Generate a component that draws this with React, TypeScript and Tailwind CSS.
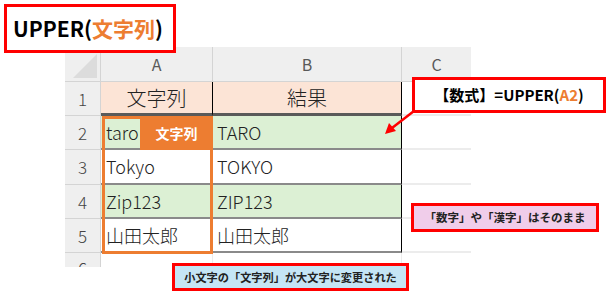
import React from "react";

const jp = { fontFamily: '"Noto Sans CJK JP", "Noto Sans", sans-serif' };

function HeadCell({ children, last }: { children?: React.ReactNode; last?: boolean }) {
  return (
    <div
      className={`flex items-center justify-center bg-[#efefef] text-[16px] text-[#595959] border-b border-[#d4d4d4] ${last ? "" : "border-r"}`}
    >
      {children}
    </div>
  );
}

function RowNum({ n }: { n: string }) {
  return (
    <div className="flex items-center justify-center bg-[#efefef] text-[17px] font-light text-[#444] border-b border-r border-[#d4d4d4]">
      {n}
    </div>
  );
}

export default function App() {
  const rows = [
    { n: "2", a: "taro", b: "TARO", green: true },
    { n: "3", a: "Tokyo", b: "TOKYO", green: false },
    { n: "4", a: "Zip123", b: "ZIP123", green: true },
    { n: "5", a: "山田太郎", b: "山田太郎", green: false },
  ];
  return (
    <div className="relative w-[616px] h-[303px] bg-white overflow-hidden" style={jp}>
      {/* spreadsheet */}
      <div className="ml-[65px] mt-[47px] w-[406px] h-[220px] overflow-hidden bg-white">
        <div className="grid grid-cols-[36px_112px_189px_69px] grid-rows-[35px_34px_34px_35px_34px_34px_14px] text-[#222]">
          {/* header row */}
          <div className="relative bg-[#efefef] border-b border-r border-[#d4d4d4]">
            <svg className="absolute right-[3px] bottom-[3px]" width="24" height="24" viewBox="0 0 24 24">
              <polygon points="24,0 24,24 0,24" fill="#dcdcdc" />
            </svg>
          </div>
          <HeadCell>A</HeadCell>
          <HeadCell>B</HeadCell>
          <HeadCell last>C</HeadCell>

          {/* row 1 */}
          <RowNum n="1" />
          <div className="flex items-center justify-center bg-[#fce4d6] text-[20px] font-light border-r border-black border-b-[3px] border-b-[#5a5a5a]">
            文字列
          </div>
          <div className="flex items-center justify-center bg-[#fce4d6] text-[20px] font-light border-r border-black border-b-[3px] border-b-[#5a5a5a]">
            結果
          </div>
          <div className="border-b-2 border-[#ececec]" />

          {rows.map((r) => (
            <React.Fragment key={r.n}>
              <RowNum n={r.n} />
              <div
                className={`flex items-center pl-[5px] text-[18px] font-light border-r border-black border-b-2 border-b-[#8a8a8a] ${r.green ? "bg-[#dcf0d4]" : "bg-white"}`}
              >
                {r.a}
              </div>
              <div
                className={`flex items-center pl-[4px] text-[18px] font-light border-r border-black border-b-2 border-b-[#8a8a8a] ${r.green ? "bg-[#dcf0d4]" : "bg-white"}`}
              >
                {r.b}
              </div>
              <div className="border-b-2 border-[#ececec]" />
            </React.Fragment>
          ))}

          {/* row 6 */}
          <div className="flex items-start justify-center bg-[#efefef] text-[17px] font-light text-[#444] leading-[22px] pt-[4px] border-r border-[#d4d4d4]">
            6
          </div>
          <div className="border-r border-[#ececec]" />
          <div className="border-r border-[#ececec]" />
          <div />
        </div>
      </div>

      {/* title */}
      <div className="absolute left-[4px] top-[4px] w-[172px] h-[49px] border-[3px] border-[#ff0000] bg-white flex items-center pl-[6px] text-[21px] font-bold text-black">
        <span>UPPER(</span>
        <span className="text-[#ed7d31]">文字列</span>
        <span>)</span>
      </div>

      {/* orange frame around A2:A5 */}
      <div className="absolute left-[102px] top-[116px] w-[111px] h-[138px] border-[3px] border-[#ed7d31]" />
      <div className="absolute left-[140px] top-[116px] w-[73px] h-[34px] bg-[#ed7d31] flex items-center justify-center text-white font-bold text-[14px]">
        文字列
      </div>

      {/* formula callout */}
      <div className="absolute left-[412px] top-[77px] w-[194px] h-[36px] border-[3px] border-[#ff0000] bg-white flex items-center justify-center font-bold text-[15px] text-black">
        <span>【数式】=UPPER(</span>
        <span className="text-[#ed7d31]">A2</span>
        <span>)</span>
      </div>
      <svg className="absolute left-0 top-0" width="616" height="303" viewBox="0 0 616 303">
        <line x1="414" y1="111" x2="392" y2="128" stroke="#ff0000" strokeWidth="2.5" />
        <polygon points="385,134 389,123 396,131" fill="#ff0000" />
      </svg>

      {/* pink note */}
      <div className="absolute left-[411px] top-[203px] w-[188px] h-[29px] border-[3px] border-[#ff0000] bg-[#f0cdea] flex items-center justify-center font-bold text-[11.5px] text-[#222]">
        「数字」や「漢字」はそのまま
      </div>

      {/* blue note */}
      <div className="absolute left-[172px] top-[263px] w-[237px] h-[28px] border-[3px] border-[#ff0000] bg-[#c5e5f5] flex items-center justify-center font-bold text-[11.2px] text-[#222]">
        小文字の「文字列」が大文字に変更された
      </div>
    </div>
  );
}
